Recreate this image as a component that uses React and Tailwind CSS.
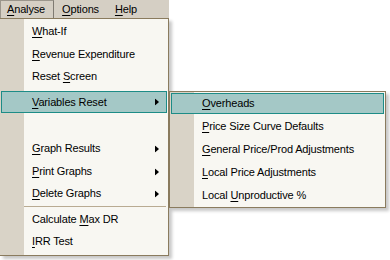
import React from "react";

const font = { fontFamily: '"Liberation Sans", Arial, sans-serif' };

function Mn({ text, u }) {
  // underline the mnemonic letter at index u
  return (
    <span>
      {text.slice(0, u)}
      <span className="underline underline-offset-[2px]">{text[u]}</span>
      {text.slice(u + 1)}
    </span>
  );
}

function Arrow() {
  return (
    <svg width="4" height="7" viewBox="0 0 4 7" className="absolute left-[155px] top-1/2 -translate-y-1/2">
      <polygon points="0,0 4,3.5 0,7" fill="#000" />
    </svg>
  );
}

function Row({ h, label, u, arrow, active, strip = true }) {
  return (
    <div className={`relative flex ${h}`}>
      {strip && <div className="w-[24px] shrink-0 bg-[#d9d3c7]" />}
      {!strip && <div className="w-[24px] shrink-0" />}
      <div className="flex-1" />
      {active && (
        <div className="absolute inset-x-[1px] inset-y-[1px] border border-[#1d8c87] bg-[#a4c8c6]" />
      )}
      {label && (
        <div className="absolute inset-y-0 left-[32px] flex items-center">
          <Mn text={label} u={u} />
        </div>
      )}
      {arrow && <Arrow />}
    </div>
  );
}

export default function App() {
  return (
    <div
      className="relative h-[260px] w-[390px] overflow-hidden bg-white text-[11px] tracking-[-0.15px] text-black"
      style={font}
    >
      {/* menu bar */}
      <div className="flex h-[18px] w-[169px] items-stretch bg-[#d5cfc4]">
        <div className="flex items-center border-t border-l border-r border-t-[#9b968c] border-l-[#9b968c] border-r-[#7f7a72] pl-[6px] pr-[8px]">
          <Mn text="Analyse" u={0} />
        </div>
        <div className="flex items-center px-[8px]">
          <Mn text="Options" u={0} />
        </div>
        <div className="flex items-center px-[8px]">
          <Mn text="Help" u={0} />
        </div>
      </div>

      {/* Analyse dropdown */}
      <div className="absolute left-0 top-[18px] w-[169px] border-t border-r border-b border-[#8a7b5e] bg-[#f8f7f2] shadow-[3px_3px_3px_rgba(0,0,0,0.22)]">
        <div className="flex flex-col">
          <Row h="h-[1px]" />
          <Row h="h-[23px]" label="What-If" u={0} />
          <Row h="h-[22px]" label="Revenue Expenditure" u={0} />
          <Row h="h-[23px]" label="Reset Screen" u={6} />
          <Row h="h-[2px]" />
          <Row h="h-[24px]" label="Variables Reset" u={0} arrow active />
          <Row h="h-[23px]" />
          <Row h="h-[23px]" label="Graph Results" u={0} arrow />
          <Row h="h-[23px]" label="Print Graphs" u={0} arrow />
          <Row h="h-[21px]" label="Delete Graphs" u={0} arrow />
          <div className="flex h-[5px]">
            <div className="w-[24px] bg-[#d9d3c7]" />
            <div className="flex flex-1 items-center pr-[2px]">
              <div className="h-px w-full bg-[#b9ab92]" />
            </div>
          </div>
          <Row h="h-[21px]" label="Calculate Max DR" u={10} />
          <Row h="h-[23px]" label="IRR Test" u={0} />
          <Row h="h-[2px]" />
        </div>
      </div>

      {/* Variables Reset submenu */}
      <div className="absolute left-[169px] top-[91px] w-[217px] border border-[#8a7b5e] bg-[#f8f7f2] shadow-[3px_3px_3px_rgba(0,0,0,0.22)]">
        <div className="flex flex-col">
          <Row h="h-[23px]" label="Overheads" u={0} active />
          <Row h="h-[23px]" label="Price Size Curve Defaults" u={0} />
          <Row h="h-[23px]" label="General Price/Prod Adjustments" u={0} />
          <Row h="h-[23px]" label="Local Price Adjustments" u={0} />
          <Row h="h-[23px]" label="Local Unproductive %" u={6} />
        </div>
      </div>
    </div>
  );
}
